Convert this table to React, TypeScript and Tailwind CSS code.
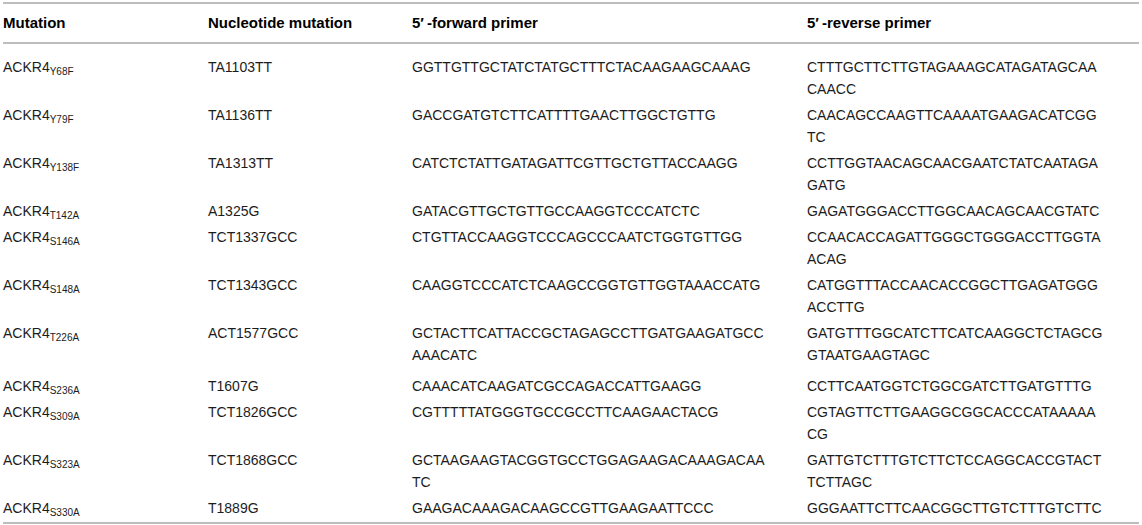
type Row = {
  site: string
  nt: string
  fwd: string[]
  rev: string[]
  tall?: boolean
}

const rows: Row[] = [
  { site: 'Y68F', nt: 'TA1103TT', fwd: ['GGTTGTTGCTATCTATGCTTTCTACAAGAAGCAAAG'], rev: ['CTTTGCTTCTTGTAGAAAGCATAGATAGCAA', 'CAACC'] },
  { site: 'Y79F', nt: 'TA1136TT', fwd: ['GACCGATGTCTTCATTTTGAACTTGGCTGTTG'], rev: ['CAACAGCCAAGTTCAAAATGAAGACATCGG', 'TC'] },
  { site: 'Y138F', nt: 'TA1313TT', fwd: ['CATCTCTATTGATAGATTCGTTGCTGTTACCAAGG'], rev: ['CCTTGGTAACAGCAACGAATCTATCAATAGA', 'GATG'] },
  { site: 'T142A', nt: 'A1325G', fwd: ['GATACGTTGCTGTTGCCAAGGTCCCATCTC'], rev: ['GAGATGGGACCTTGGCAACAGCAACGTATC'] },
  { site: 'S146A', nt: 'TCT1337GCC', fwd: ['CTGTTACCAAGGTCCCAGCCCAATCTGGTGTTGG'], rev: ['CCAACACCAGATTGGGCTGGGACCTTGGTA', 'ACAG'] },
  { site: 'S148A', nt: 'TCT1343GCC', fwd: ['CAAGGTCCCATCTCAAGCCGGTGTTGGTAAACCATG'], rev: ['CATGGTTTACCAACACCGGCTTGAGATGGG', 'ACCTTG'] },
  { site: 'T226A', nt: 'ACT1577GCC', fwd: ['GCTACTTCATTACCGCTAGAGCCTTGATGAAGATGCC', 'AAACATC'], rev: ['GATGTTTGGCATCTTCATCAAGGCTCTAGCG', 'GTAATGAAGTAGC'], tall: true },
  { site: 'S236A', nt: 'T1607G', fwd: ['CAAACATCAAGATCGCCAGACCATTGAAGG'], rev: ['CCTTCAATGGTCTGGCGATCTTGATGTTTG'] },
  { site: 'S309A', nt: 'TCT1826GCC', fwd: ['CGTTTTTATGGGTGCCGCCTTCAAGAACTACG'], rev: ['CGTAGTTCTTGAAGGCGGCACCCATAAAAA', 'CG'] },
  { site: 'S323A', nt: 'TCT1868GCC', fwd: ['GCTAAGAAGTACGGTGCCTGGAGAAGACAAAGACAA', 'TC'], rev: ['GATTGTCTTTGTCTTCTCCAGGCACCGTACT', 'TCTTAGC'] },
  { site: 'S330A', nt: 'T1889G', fwd: ['GAAGACAAAGACAAGCCGTTGAAGAATTCCC'], rev: ['GGGAATTCTTCAACGGCTTGTCTTTGTCTTC'] },
]

function Lines({ lines }: { lines: string[] }) {
  return (
    <>
      {lines.map((l) => (
        <div key={l} className="whitespace-nowrap">
          {l}
        </div>
      ))}
    </>
  )
}

export default function App() {
  return (
    <div
      className="bg-white px-[3px] pt-[2px] text-[14px] leading-[22px] text-[#1c1c1c]"
      style={{ fontFamily: '"Liberation Sans", Arial, sans-serif' }}
    >
      <table className="w-full table-fixed border-collapse">
        <colgroup>
          <col className="w-[205px]" />
          <col className="w-[204px]" />
          <col className="w-[395px]" />
          <col />
        </colgroup>
        <thead>
          <tr className="border-y-2 border-[#bdbdbd] text-left text-[15px] text-black">
            <th className="py-[8px] font-bold">Mutation</th>
            <th className="py-[8px] font-bold">Nucleotide mutation</th>
            <th className="py-[8px] font-bold">
              5<span className="mr-[3px]">′</span>-forward primer
            </th>
            <th className="py-[8px] font-bold">
              5<span className="mr-[3px]">′</span>-reverse primer
            </th>
          </tr>
        </thead>
        <tbody className="border-b-2 border-[#bdbdbd]">
          {rows.map((r, i) => {
            const pad = [
              i === 0 ? 'pt-[12px]' : 'pt-[2px]',
              r.tall ? 'pb-[7px]' : i === rows.length - 1 ? 'pb-[3px]' : 'pb-[2px]',
            ].join(' ')
            return (
              <tr key={r.site} className="align-top">
                <td className={pad}>
                  ACKR4
                  <sub className="-bottom-[3px] text-[10px]">{r.site}</sub>
                </td>
                <td className={pad}>{r.nt}</td>
                <td className={pad}>
                  <Lines lines={r.fwd} />
                </td>
                <td className={pad}>
                  <Lines lines={r.rev} />
                </td>
              </tr>
            )
          })}
        </tbody>
      </table>
    </div>
  )
}
